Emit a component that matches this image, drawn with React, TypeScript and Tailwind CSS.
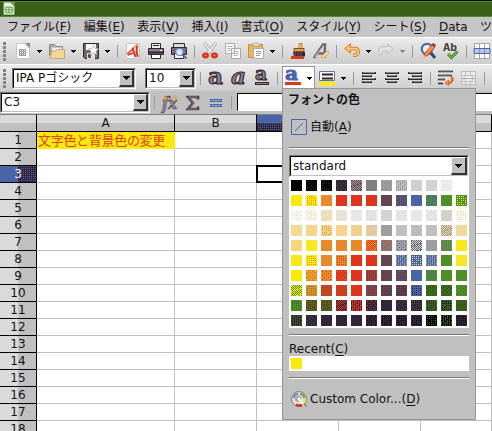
import React from "react";

type Kids = { children?: React.ReactNode };

const Svg = ({ children, className = "" }: Kids & { className?: string }) => (
  <svg viewBox="0 0 16 16" className={`h-4 w-4 shrink-0 overflow-visible ${className}`} fill="none">
    {children}
  </svg>
);

const Arrow = ({ faded = false }: { faded?: boolean }) => (
  <svg viewBox="0 0 5 3" className="-ml-px h-[3px] w-[5px] shrink-0" shapeRendering="crispEdges">
    <path d="M0 0h5v1h-1v1h-1v1h-1v-1h-1v-1h-1z" fill={faded ? "#888" : "#000"} />
  </svg>
);

const Sep = () => <div className="h-[13px] w-px shrink-0 bg-[#9a9a9a]" />;

const Handle = () => (
  <div className="ml-[3px] flex h-[19px] w-[3px] shrink-0 flex-col justify-between">
    {[0, 1, 2, 3, 4].map((i) => (
      <div key={i} className="h-[3px] w-[3px] bg-[#858585]" />
    ))}
  </div>
);

const Combo = ({ text, box, btn }: { text: string; box: string; btn: string }) => (
  <div className={`flex shrink-0 border border-t-[#777] border-r-white border-b-white border-l-[#777] bg-white ${box}`}>
    <div className="flex min-w-0 flex-1 border border-t-black border-r-[#c0c0c0] border-b-[#c0c0c0] border-l-black">
      <div className="flex flex-1 items-center overflow-hidden pl-0.5 whitespace-nowrap">{text}</div>
      <div
        className={`flex shrink-0 items-center justify-center border-t border-r-2 border-b-2 border-l border-t-white border-r-[#333] border-b-[#333] border-l-white bg-[#c0c0c0] ${btn}`}
      >
        <svg viewBox="0 0 7 4" className="h-1 w-[7px]" shapeRendering="crispEdges">
          <path d="M0 0h7v1h-1v1h-1v1h-1v1h-1v-1h-1v-1h-1v-1h-1z" fill="#000" />
        </svg>
      </div>
    </div>
  </div>
);

const Label = ({ text, k }: { text: string; k: string }) => (
  <span className="whitespace-nowrap">
    {text}(<u className="underline decoration-1 underline-offset-2">{k}</u>)
  </span>
);

/* Toolbar icons */
const DK = "#33242f";

const NewDoc = () => (
  <Svg>
    <path d="M1.500.5h8l5 5v10h-13z" fill="#fff" stroke="#c6c6c6" />
    <path d="M10 0h5v5z" fill="#8b8b8b" />
    <path d="M4.500 6.500h6v6h-6zM6.500 6.500v6M8.500 6.500v6M4.500 8.500h6M4.500 10.500h6" stroke="#999" shapeRendering="crispEdges" />
  </Svg>
);
const Open = () => (
  <Svg>
    <path d="M.5 13V1.500h5l1 2h7V9" fill="#aaa" stroke="#888" />
    <path d="M3 4.500h10v5H3z" fill="#eee" />
    <path d="M1 15.500L3 8h4l1.500-1.500H15.500v9z" fill="#f0d795" stroke="#caa866" />
  </Svg>
);
const Save = () => (
  <Svg>
    <path d="M.5.500h15v15H2L.5 14z" fill="#72636f" stroke={DK} />
    <path d="M3 1h10v6H3z" fill="#f7f7f7" />
    <path d="M4 10h8v6H4z" fill="#ddd" />
    <path d="M5 11h3v4H5z" fill="#555" />
    <path d="M10.500 2.500l1.500 3 3.500.3-2.500 2.500.8 3.200-3.300-1.500-3 1.500.5-3.300L5.500 5.800 9 5.500z" fill="#fff" stroke="#aaa" strokeWidth=".7" />
  </Svg>
);
const Pdf = () => (
  <Svg>
    <path d="M1.500.5h13v15h-13z" fill="#fafafa" stroke="#c4c4c4" />
    <path d="M2 11L8.500 5.500M3 12l5-2" stroke="#e0331c" strokeWidth="1.600" />
    <path d="M7.500 4.500L10.500 14M12.500 2.500Q10.500 8 13 14" stroke="#e0331c" strokeWidth="2" />
    <path d="M8.500 5l4-4" stroke="#e88a2a" strokeWidth="1.300" />
  </Svg>
);
const Print = () => (
  <Svg>
    <path d="M3.500.5h9v5h-9z" fill="#eee" stroke={DK} />
    <path d="M5 2.500h6" stroke={DK} />
    <path d="M.5 5.500h15v6H.5z" fill="#8b8089" stroke={DK} />
    <path d="M1 9.500h14" stroke={DK} strokeWidth="2" />
    <path d="M3.500 11.500h9v4h-9z" fill="#fff" stroke={DK} />
    <path d="M12 7.500h2" stroke="#fff" />
  </Svg>
);
const Preview = () => (
  <Svg>
    <path d="M2.500.5h11v4h-11z" fill="#ddd" stroke={DK} />
    <path d="M.5 4.500h15v7H.5z" fill="#786c76" stroke={DK} />
    <path d="M3.500 10.500h9v5h-9z" fill="#fff" stroke={DK} />
    <circle cx="8.500" cy="9" r="3.700" fill="#dce6ff" stroke="#6f87bd" strokeWidth="1.200" />
    <path d="M11 11.500l4.500 4" stroke="#4b66aa" strokeWidth="2" />
  </Svg>
);
const Cut = () => (
  <Svg>
    <path d="M2 0l9 11M14 0L5 11" stroke="#999" strokeWidth="2.800" />
    <path d="M2 0l9 11M14 0L5 11" stroke="#f5f5f5" strokeWidth="1.500" />
    <ellipse cx="3.500" cy="12.500" rx="3.500" ry="3" fill="#e0331c" />
    <ellipse cx="12.500" cy="12.500" rx="3.500" ry="3" fill="#e0331c" />
    <path d="M3 12.500h1M12 12.500h1" stroke="#fff" />
  </Svg>
);
const Copy = () => (
  <Svg>
    <path d="M.5.5h9v10h-9zM6.500 5.500h9v10h-9z" fill="#fafafa" stroke="#aaa" />
    <path d="M2.500 3.500h5M2.500 5.500h3M2.500 7.500h3M8.500 8.500h5M8.500 10.500h5M8.500 12.500h4" stroke="#b5b5b5" />
  </Svg>
);
const Paste = () => (
  <Svg>
    <path d="M.5 1.500h14v13H.5z" fill="#edb65e" stroke="#d4882e" />
    <path d="M4 3V1h2l1-1h2l1 1h2v2z" fill="#e5e5e5" stroke="#888" strokeWidth=".6" />
    <path d="M5.500 5.500h10v10h-10z" fill="#fff" stroke="#aaa" />
    <path d="M8 8.500h5M8 10.500h5M8 12.500h4" stroke="#999" />
  </Svg>
);
const Brush = () => (
  <Svg>
    <path d="M9 .5h3v5H9z" fill="#f7c66c" stroke="#ce8130" />
    <path d="M4 5.500h10v3H4z" fill="#e9a34b" stroke="#7a4930" />
    <path d="M3 9h12v4q-2 2-3 2.500H4z" fill={DK} />
    <path d="M1 14.500h13" stroke="#e0331c" strokeWidth="3" />
    <path d="M5 9v4M8 9v4M11 9v5" stroke="#79646e" />
  </Svg>
);
const ClearFormat = () => (
  <Svg>
    <path d="M1 15L10 1.500h2L11.500 15M4 10.500h8" stroke="#74666e" strokeWidth="2.500" />
    <path d="M2 14L11 2.500" stroke="#ddd" />
    <path d="M8 14l6-6 2 2-5 5z" fill="#fbe0a4" stroke="#dd9d4b" />
  </Svg>
);
const Undo = () => (
  <Svg>
    <path d="M4 5.500h7q3.200 0 3.200 3.200t-3.500 3.600H9" stroke="#dd7d1b" strokeWidth="3.400" />
    <path d="M6.500.8v9.400L.5 5.500z" fill="#f9c26c" stroke="#dd7d1b" />
    <path d="M4 5.500h7q3.200 0 3.200 3.200t-3.500 3.600H9.500" stroke="#fad89b" strokeWidth="1.400" />
  </Svg>
);
const Redo = () => (
  <Svg>
    <path d="M9.500 3V1l6 4.800-6 4.700V8H5Q3 8.500 3.500 12.500 0 11 .8 6.500 2 3.500 5 3.500h4.500z" fill="#e2e2e2" stroke="#bcbcbc" />
  </Svg>
);
const Find = () => (
  <Svg>
    <circle cx="7" cy="6" r="5.200" fill="#f1f1f1" stroke="#4b66aa" strokeWidth="2.200" />
    <path d="M11 10l4 5" stroke="#33467d" strokeWidth="3" />
    <path d="M3 15l2-5 7-8 3 2-7 8z" fill="#ee933a" stroke="#d5411e" />
    <path d="M11 2l2-2 3 2-1 2z" fill="#7c444e" />
    <path d="M2 16l1.500-4 2.500 2z" fill="#e7cc99" />
  </Svg>
);
const Spell = () => (
  <Svg>
    <text x="0" y="8" fontSize="11" fontWeight="bold" fill="#4b3e47" textLength="14" lengthAdjust="spacingAndGlyphs" style={{ fontFamily: "DejaVu Sans, sans-serif" }}>
      Ab
    </text>
    <path d="M5 11l3.500 3.500 6-6" stroke="#3e821c" strokeWidth="3" />
    <path d="M5 11l3.500 3.500 6-6" stroke="#9ccc77" />
  </Svg>
);
const Table = () => (
  <Svg>
    <path d="M.5.5h15v15H.5z" fill="#fff" stroke="#a5a5a5" />
    <path d="M5.500 0v16M10.500 0v16" stroke="#a5a5a5" />
    <path d="M0 5.500h16v5H0z" fill="#b8c6e4" stroke="#4b66aa" />
    <path d="M5.500 6v4M10.500 6v4" stroke="#8099cc" />
  </Svg>
);

const GlyphA = ({ fill = "#898388", stroke = DK, italic = false, line = "" }: { fill?: string; stroke?: string; italic?: boolean; line?: string }) => (
  <Svg>
    <text
      x="0"
      y={line ? 11 : 14}
      fontSize={line ? 19 : 22}
      fontWeight="bold"
      fontStyle={italic ? "italic" : "normal"}
      fill={fill}
      stroke={stroke}
      strokeWidth="1"
      textLength={line ? 13 : 15}
      lengthAdjust="spacingAndGlyphs"
      style={{ fontFamily: "DejaVu Serif, serif" }}
    >
      a
    </text>
    {line && <path d="M0 14.500h16" stroke={line} strokeWidth="3" />}
  </Svg>
);
const Underline = () => (
  <Svg>
    <text x="1" y="10" fontSize="18" fontWeight="bold" fill="#898388" stroke={DK} textLength="12" lengthAdjust="spacingAndGlyphs" style={{ fontFamily: "DejaVu Serif, serif" }}>
      a
    </text>
    <path d="M1 13.500h14" stroke={DK} strokeWidth="3" />
    <path d="M2 13.500h12" stroke="#8d858b" />
  </Svg>
);
const Highlight = () => (
  <Svg>
    <path d="M.5 1.500h15v9H.5z" fill="#f8f8f8" stroke="#5b74b0" />
    <path d="M3 4.500h11M3 8.500h11" stroke={DK} strokeWidth="2" />
    <path d="M0 13.500h16" stroke="#f9ea0c" strokeWidth="4" />
  </Svg>
);
const Align = ({ rows }: { rows: number[][] }) => (
  <Svg>
    {rows.map(([x, w], i) => (
      <g key={i}>
        <rect x={x} y={2 + i * 3} width={w} height="2" fill={DK} />
        <rect x={x + 1} y={2 + i * 3} width={w - 2} height="1" fill="#89918b" />
      </g>
    ))}
  </Svg>
);
const Wrap = () => (
  <Svg>
    <path d="M0 1.500h15M0 5.500h14M0 9.500h7M0 13.500h5" stroke={DK} strokeWidth="1.600" />
    <path d="M1 1h13M1 5h12M1 9h5" stroke="#89918b" />
    <path d="M13 7q2.500 1.500 1 4t-4 2" stroke="#dc6d24" strokeWidth="2.400" />
    <path d="M10.500 10v5.500L7 13z" fill="#f59d43" stroke="#dc6d24" />
  </Svg>
);
const Merge = () => (
  <Svg>
    <path d="M.5 1.500h14v13H.5zM0 5.500h15M0 11.500h15M4.500 1v4M9.500 1v4M4.500 12v3M9.500 12v3" fill="#eee" stroke="#bbb" />
    <path d="M2 8.500h11M4 6.500l-2 2 2 2M11 6.500l2 2-2 2" stroke="#aaa" />
  </Svg>
);
const Fx = () => (
  <Svg>
    <text x="0" y="14" fontSize="16" fontStyle="italic" fontWeight="bold" fill="#918890" stroke="#4b3e47" strokeWidth=".6" textLength="15" lengthAdjust="spacingAndGlyphs" style={{ fontFamily: "DejaVu Serif, serif" }}>
      fx
    </text>
    <path d="M3 1v4M1 3h4M12.500 0v5M10 2.500h5" stroke="#efa13c" strokeWidth="1.300" />
  </Svg>
);

/* Colour swatches */
const C: Record<string, string> = {
  k: "#000000", n: "#33243a", m: "#63444f", g: "#808080", h: "#9c9ea0", i: "#c0c0c0", j: "#d0d0d0", l: "#e7e7e7",
  w: "#f8f8f8", y: "#f9ea0c", o: "#e88a2a", r: "#e0331c", b: "#4a64a8", e: "#4f8f28", f: "#375f1b", p: "#f5d48b",
};

/* Each token is base colour, dot colour and weave: s sparse, d dotted, c checked, v striped. */
const PALETTE = [
  "k kns knd nfs mhc g hgs ihv j jls lwd .",
  "y yod o r r r m mbv b ebv e eyd",
  "wps wpd lpc lpd l ljd jls ljs l ljs jps wpd",
  "pws p pod p pis pic h i ihs i hpc pld",
  "pys ypd o o o orc grd hbs bpc h egv yps",
  "yps yod o ord r r m bhv bpd bhv e ypd",
  "y oys ors ros r mrv m mbd b ebd e e",
  "yec oed red res r mrd mns mnd bnd fes fes efs",
  "efd frd frd nrc rnv nrs n nms nfd fnd fkd f",
  "nfv nfs n n n nks nkd nkd nkd kfd kfv nkd",
].map((r) => r.split(" "));

const inWeave = (t: string, x: number, y: number) =>
  t === "s" ? x % 4 === (y % 4 === 1 ? 1 : 3) && y % 2 === 1
  : t === "d" ? x % 2 === 1 && y % 2 === 1 && (x * 3 + y) % 7 !== 0
  : t === "c" ? (x + y) % 2 === 0 && (x + y * 3) % 9 !== 0
  : t === "v" ? x % 2 === 0 && (x + y) % 5 !== 0
  : false;

const Swatch = ({ token }: { token: string }) => {
  if (token === ".") return <div />;
  let d = "";
  if (token.length === 3)
    for (let y = 0; y < 11; y++) for (let x = 0; x < 11; x++) if (inWeave(token[2], x, y)) d += `M${x} ${y}h1v1h-1z`;
  return (
    <svg viewBox="0 0 11 11" className="h-[11px] w-[11px]" shapeRendering="crispEdges">
      <path d="M0 0h11v11H0z" fill={C[token[0]]} />
      {d && <path d={d} fill={C[token[1]]} />}
    </svg>
  );
};

const Rule = ({ className }: { className: string }) => (
  <div className={`h-[2px] border-t border-t-[#777] bg-white ${className}`} />
);

const ColorPopup = () => (
  <div className="absolute top-[88px] left-[282px] z-10 flex h-[332px] w-[194px] flex-col border border-[#969696] bg-[#c0c0c0] px-[6px]">
    <div className="-ml-px h-[22px] text-xs leading-[22px] font-bold">フォントの色</div>
    <div className="mt-[7px] ml-[2px] flex h-[18px] items-center gap-[3px]">
      <svg viewBox="0 0 16 16" className="h-4 w-4" fill="none">
        <path d="M.5.5h15v15H.5zM4 12l8-8" stroke="#4a64a8" />
      </svg>
      <Label text="自動" k="A" />
    </div>
    <Rule className="mt-[11px]" />
    <Combo text="standard" box="mt-[6px] h-[22px]" btn="w-4" />
    <div className="grid h-[151px] grid-cols-[repeat(12,11px)] content-start gap-1 bg-white pt-[3px] pl-[2px]">
      {PALETTE.flat().map((t, i) => (
        <Swatch key={i} token={t} />
      ))}
    </div>
    <Rule className="mt-[6px]" />
    <div className="mt-[5px] flex h-[15px] items-center">
      <Label text="Recent" k="C" />
    </div>
    <div className="h-[15px] bg-white p-[2px]">
      <div className="h-[11px] w-[11px] bg-[#f9ea0c]" />
    </div>
    <Rule className="mt-[6px]" />
    <div className="mt-3 ml-[2px] flex h-4 items-center gap-[3px]">
      <Svg>
        <circle cx="8" cy="8" r="7.500" fill="#ddd" stroke="#8a8085" />
        <path d="M2.500 7A6 6 0 0 1 7 2.500" stroke="#6f87bd" strokeWidth="2.200" />
        <path d="M9 2.500a6 6 0 0 1 4.500 4.500" stroke="#6ea34c" strokeWidth="2.200" />
        <path d="M14 8a6 6 0 0 1-1.500 3.500" stroke="#f9ea0c" strokeWidth="2.500" />
        <path d="M5 13.800q3 1.500 6 0" stroke="#e0331c" strokeWidth="2.800" />
        <circle cx="7" cy="7.500" r="3.200" fill="#aaa" />
        <path d="M7 7l7 8" stroke="#fff" strokeWidth="2" />
        <path d="M12.500 12.500l3 3" stroke="#777" strokeWidth="1.600" />
      </Svg>
      <Label text="Custom Color..." k="D" />
    </div>
  </div>
);

const MENU = [["ファイル", "F"], ["編集", "E"], ["表示", "V"], ["挿入", "I"], ["書式", "O"], ["スタイル", "Y"], ["シート", "S"]];

const ditherDark = "bg-[#33243a] bg-[conic-gradient(#4a64a8_25%,transparent_0)] bg-[size:2px_2px]";

const Sheet = () => (
  <div className="grid h-[317px] w-[492px] auto-rows-[17px] grid-cols-[37px_138px_82px_82px_82px_71px] grid-rows-[18px] overflow-hidden bg-white">
    {["", "A", "B", "C", "D", "E"].map((c, i) => (
      <div
        key={c}
        className="relative flex items-center justify-center border-t border-r border-b border-t-[#808080] border-r-black border-b-black bg-[linear-gradient(#dadada_50%,#c0c0c0_50%)]"
      >
        {i === 3 && (
          <div className="absolute inset-0 flex flex-col">
            <div className="flex-1 bg-[#4a64a8]" />
            <div className={`flex-1 ${ditherDark}`} />
          </div>
        )}
        <span className="relative">{c}</span>
      </div>
    ))}
    {Array.from({ length: 18 }, (_, r) => r + 1).map((r) => (
      <React.Fragment key={r}>
        <div className={`relative flex items-center justify-center border-r border-b border-black ${r === 3 ? "text-white" : "bg-[linear-gradient(90deg,#dadada_50%,#c0c0c0_50%)]"}`}>
          {r === 3 && (
            <div className="absolute inset-0 flex">
              <div className="flex-1 bg-[#4a64a8]" />
              <div className={`flex-1 ${ditherDark}`} />
            </div>
          )}
          <span className="relative">{r}</span>
        </div>
        {[0, 1, 2, 3, 4].map((c) =>
          r === 1 && c === 0 ? (
            <div key={c} className="flex items-center bg-[#f9ea0c] pl-px text-[13px] tracking-[-0.3px] whitespace-nowrap text-[#df4020]">
              文字色と背景色の変更
            </div>
          ) : r === 3 && c === 2 ? (
            <div key={c} className="-mt-px -ml-px border-2 border-black" />
          ) : (
            <div key={c} className="border-r border-b border-[#c0c0c0]" />
          )
        )}
      </React.Fragment>
    ))}
  </div>
);

export default function App() {
  return (
    <div className="relative flex h-[431px] w-[492px] flex-col overflow-hidden bg-[#c0c0c0] font-['DejaVu_Sans','Noto_Sans_CJK_JP',sans-serif] text-xs leading-none text-[#151015]">
      <div className="flex h-[17px] shrink-0 items-center border-t border-b border-t-black border-b-[#4f8f28] bg-[#375f17] pl-[3px] shadow-[inset_0_1px_#4f8f28]">
        <svg viewBox="0 0 12 14" className="h-[13px] w-3" fill="none">
          <path d="M.5.5h7l4 4v9H.5z" fill="#eef3ea" stroke="#9ebd8c" />
          <path d="M8 0h4v4z" fill="#73a953" />
          <path d="M2.500 5.500h7v6h-7zM2.500 8.500h7M6 5.500v6" stroke="#4f8f28" />
        </svg>
      </div>
      <div className="flex h-5 shrink-0 items-center gap-[12.5px] overflow-hidden bg-[#c6c6c6] pl-[7px] whitespace-nowrap">
        {MENU.map(([t, k]) => (
          <Label key={k} text={t} k={k} />
        ))}
        <span>
          <u className="underline-offset-2">D</u>ata
        </span>
        <span>ツ</span>
      </div>
      <div className="flex h-[27px] shrink-0 items-center gap-[7px] overflow-hidden border-t border-white bg-linear-to-b from-[#ececec] to-[#cccccc]">
        <Handle />
        <div className="ml-[2px]"><NewDoc /></div>
        <Arrow /><Open /><Arrow /><Save /><Arrow /><Sep />
        <Pdf /><Print /><Preview /><Sep />
        <Cut /><Copy /><Paste /><Arrow /><Sep />
        <Brush /><ClearFormat /><Sep />
        <Undo /><Arrow /><Redo /><Arrow faded /><Sep />
        <Find /><Spell /><Sep /><Table />
      </div>
      <div className="flex h-[27px] shrink-0 items-center gap-[7px] overflow-hidden border-t border-white bg-linear-to-b from-[#ececec] to-[#cccccc]">
        <Handle />
        <Combo text="IPA Pゴシック" box="-ml-px h-[21px] w-[124px]" btn="w-[15px]" />
        <Combo text="10" box="ml-[2px] h-[21px] w-[51px]" btn="w-[15px]" />
        <div className="-ml-[3px]"><Sep /></div>
        <GlyphA />
        <GlyphA italic />
        <Underline />
        <Sep />
        <div className="mt-px -ml-[3px] flex h-[25px] w-[33px] shrink-0 items-start gap-[7px] self-start border border-b-0 border-[#969696] bg-white pt-[2px] pl-[2px]">
          <GlyphA fill="#4a64a8" stroke="#4a64a8" line="#e0331c" />
          <div className="flex h-[18px] items-center"><Arrow /></div>
        </div>
        <div className="-ml-[3px]"><Highlight /></div>
        <Arrow /><Sep />
        <Align rows={[[1, 14], [1, 10], [1, 14], [1, 10]]} />
        <Align rows={[[1, 14], [3, 10], [1, 14], [3, 10]]} />
        <Align rows={[[1, 14], [5, 10], [1, 14], [5, 10]]} />
        <Sep /><Wrap /><Merge /><Sep />
      </div>
      <div className="flex h-[23px] shrink-0 items-center overflow-hidden">
        <Combo text="C3" box="-mt-px h-[21px] w-[150px]" btn="w-[15px]" />
        <div className="ml-1"><Sep /></div>
        <div className="ml-[7px]"><Fx /></div>
        <Svg className="ml-[7px]">
          <path d="M13 4.500V2H3l5 6-5 6h10v-2.500" stroke="#4b3e47" strokeWidth="2.600" />
          <path d="M12.500 2H3.500l5 6-5 6h9" stroke="#90888e" strokeWidth=".8" />
        </Svg>
        <Svg className="ml-[7px]">
          <path d="M2 5.500h12M2 10.500h12" stroke="#4a64a8" strokeWidth="3" />
          <path d="M3 5.500h10M3 10.500h10" stroke="#91a5d4" />
        </Svg>
        <div className="ml-[7px]"><Sep /></div>
        <div className="-mt-px ml-[5px] h-[18px] flex-1 border-t border-b border-l border-t-black border-b-white border-l-black bg-white" />
      </div>
      <Sheet />
      <ColorPopup />
    </div>
  );
}
